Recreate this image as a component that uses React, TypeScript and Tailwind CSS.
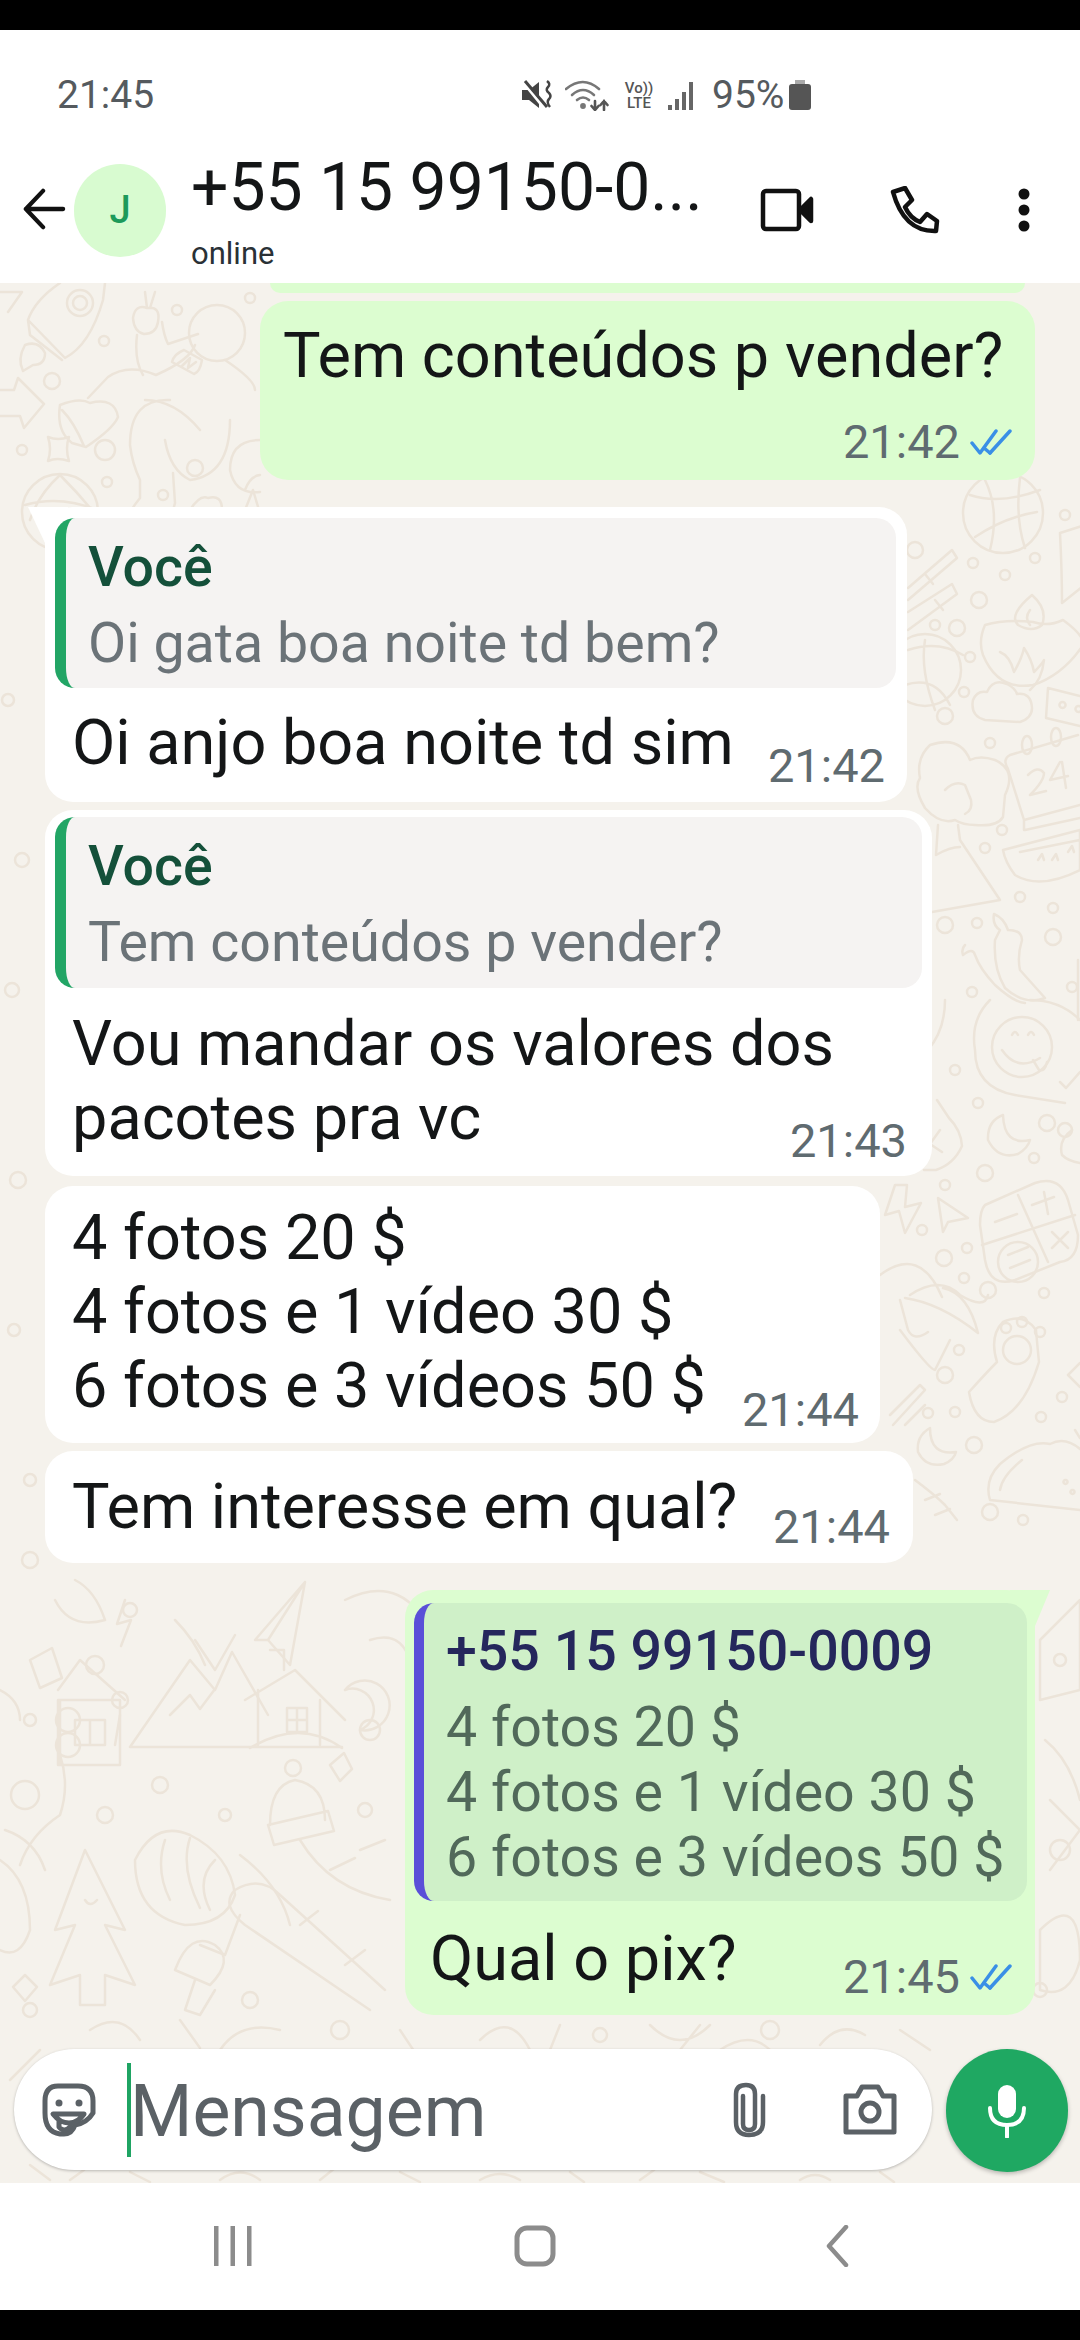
import React from "react";

const DOTS: [number, number, number][] = [
  [104,341,5],[52,381,8],[105,450,10],[195,468,8],[107,482,5],[22,450,5],[177,310,5],[250,298,5],[163,495,5],
  [915,550,8],[973,563,5],[1005,575,5],[979,600,8],[1035,558,5],[1065,515,5],[935,625,5],[957,628,8],[970,657,5],[964,692,5],[945,716,8],[990,743,5],[1002,830,5],[985,848,5],[1020,897,5],[1053,908,5],[1053,937,8],[945,925,8],[977,923,5],[972,992,5],[1072,987,5],
  [955,1070,5],[978,1103,5],[1047,1123,8],[1034,1158,5],[985,1173,8],[945,1185,5],[922,1230,5],[944,1258,8],[967,1248,5],[964,1278,5],[988,1290,8],[1044,1293,5],[959,1350,5],[945,1375,8],[1062,1397,5],[1041,1417,5],[928,1413,5],[955,1412,5],[974,1445,8],[990,1512,8],[1023,1520,5],
  [30,1560,8],[130,1610,7],[95,1665,9],[30,1720,6],[370,1730,10],[160,1785,8],[25,1795,14],[225,1815,6],[105,1815,8],[365,1810,7],[250,2000,8],[30,2010,7],[1060,1850,10],[1060,1660,6],[1040,1990,7],[340,2030,9],[600,2035,7],[770,2030,9],[12,990,7],[18,1180,8],[1065,1130,7],[8,700,6],[22,860,7],[14,1330,6],[30,1480,6]
];

function Wallpaper() {
  return (
    <svg className="absolute inset-0 w-full h-full" viewBox="0 0 1080 1900" fill="none" stroke="#ece4d9" strokeWidth="2.5" strokeLinecap="round" strokeLinejoin="round">
      <g transform="translate(0,-283)">
        {DOTS.map(([x, y, r], i) => <circle key={i} cx={x} cy={y} r={r} />)}
        {/* rocket */}
        <path d="M60 283 Q35 300 28 320 L65 358 Q90 345 103 300 L105 283 M28 320 L30 335 L62 360" />
        <circle cx="80" cy="303" r="13" /><circle cx="80" cy="303" r="7" />
        <path d="M25 345 q14 -5 20 8 q0 12 -12 12 l-10 6 q-6 -12 2 -26" />
        <path d="M0 292 H22 L8 312 M0 390 h14 l4 -12 26 26 -20 24 -4 -12 H0" />
        <path d="M48 437 q10 4 21 0 q-4 11 0 24 q-12 -4 -21 0 q4 -12 0 -24" />
        {/* astronaut */}
        <circle cx="217" cy="333" r="28" />
        <path d="M145 292 l2 16 M155 292 l-5 16 M133 318 q2 -14 14 -10 q14 -2 11 14 q-2 12 -14 12 q-10 -2 -11 -16" />
        <path d="M137 335 q-3 25 6 40 M162 322 q2 14 6 22 l30 -10 M195 345 q-5 15 -39 30 q-28 -12 -48 2 L88 398 M225 360 q30 20 30 30 M60 405 q20 -8 30 -2 q25 -6 28 14 q-5 12 -32 30 l-14 -4 q-16 -12 -12 -38 M62 410 q12 12 22 36 M170 400 q-40 -2 -40 45 q2 18 10 35 l0 18 q-16 20 -15 30 q5 6 25 10 q18 -6 25 -35 l-2 -30 M145 400 q30 0 55 30 M165 440 q5 30 25 40 q40 -5 40 -60" />
        <path d="M172 362 l22 12 q6 -2 8 -14 l-18 -10 q-10 4 -12 12 z M182 366 l8 -8 -2 10 8 -6" />
        <path d="M260 440 q-30 0 -30 30 q5 25 30 22 M245 490 q5 -14 15 -15" />
        <circle cx="60" cy="512" r="38" />
        <path d="M25 505 q35 -10 72 5 M60 475 q-22 20 -30 45 M60 475 q20 20 36 40" />
        {/* sliver area */}
        <path d="M190 510 q10 -16 18 -12 q14 -4 14 12 M245 510 l8 -20 6 20" />

        {/* disco ball */}
        <circle cx="1003" cy="513" r="40" />
        <path d="M970 495 q30 10 70 -5 M975 537 q30 -20 62 -25 M985 480 q15 30 5 70 M1020 478 q-5 40 5 70" />
        <path d="M1060 533 l25 -8 M1060 533 q2 40 2 70 l20 -16" />
        {/* crayons */}
        <path d="M908 588 L952 550 L957 558 L908 600 M908 612 L952 584 L957 594 L908 630 M925 574 l8 10 M935 600 l8 10" />
        <circle cx="925" cy="670" r="36" />
        <path d="M908 650 q30 -10 55 5 M905 685 q30 -10 45 20 M925 640 q-5 30 10 70" />
        {/* diya */}
        <path d="M1018 625 q-10 -10 14 -30 q16 14 10 30 q-10 8 -24 0 z M1030 610 q-6 8 0 15" />
        <path d="M985 625 q20 -6 48 -3 q15 5 30 -2 q22 16 20 25 q-20 30 -50 40 q-35 6 -50 -30 q-5 -14 2 -30" />
        <path d="M1000 652 q10 4 14 20 q8 -14 10 -24 q8 12 10 24 q8 -8 10 -12 q-2 20 -14 30" />
        {/* cloud */}
        <path d="M985 720 q-15 -4 -12 -20 q4 -10 14 -8 q6 -14 20 -8 q8 4 10 10 q14 -2 15 14 q0 10 -12 14 z" />
        <path d="M1048 688 l32 8 M1048 688 l-2 30 34 8 M1062 702 a3 3 0 1 0 1 0 M1078 706 a3 3 0 1 0 1 0" />
        {/* calendar 24 */}
        <path d="M1010 755 L1078 735 M1010 755 q-8 4 -2 14 L1024 820 L1080 805 M1025 830 L1080 818 M1024 820 v10" />
        <ellipse cx="1027" cy="745" rx="5" ry="9" /><ellipse cx="1056" cy="737" rx="5" ry="9" />
        <path d="M1028 775 q10 -10 16 -2 q0 8 -14 22 l16 -4 M1060 762 l-10 18 18 -4 M1062 762 l4 26" />
        {/* volcano */}
        <path d="M930 745 q30 -10 40 15 q10 -5 25 0 q22 10 10 35 l-2 22 q-6 10 -28 8 q-12 0 -20 -5 q-15 5 -30 -12 q-12 -20 -5 -30 q-4 -20 10 -33" />
        <path d="M945 790 q10 -10 20 -5 l6 15 q2 10 -6 14 M938 825 l-2 30 M958 825 l2 15 L1000 900 L932 912 M936 855 q14 -8 24 -8" />
        {/* watermelon */}
        <path d="M1003 850 L1080 830 V870 Q1040 890 1015 875 Q1005 862 1003 850 Z M1020 852 L1080 840" />
        <path d="M1038 860 l4 -6 2 6 M1052 860 l4 -6 2 6 M1068 852 l4 -6 2 6" />
        {/* chili */}
        <path d="M1000 930 q-8 -5 -6 -16 q10 4 14 16 q14 0 14 10 q-5 16 -2 30 l25 28 q-20 8 -40 -10 q-12 -20 -10 -48 z M965 945 q-4 4 -2 10 q10 -8 12 0 q5 14 20 30 q20 18 30 18" />
        <path d="M1078 960 v60" />
        {/* smiley */}
        <path d="M990 1000 q-20 20 -15 50 q0 38 40 45 l50 8 M1030 1000 q30 0 50 20" />
        <circle cx="1022" cy="1047" r="30" />
        <path d="M1002 1050 q15 22 38 8 M1012 1035 q3 -6 6 0 M1028 1035 q3 -6 6 0 M1033 1060 l6 10 q6 2 8 -8 M1060 1082 l6 6 14 -16" />
        <path d="M945 1000 q0 30 -17 50" />
        {/* moon + mask */}
        <path d="M1003 1115 q-16 6 -15 25 q10 20 30 14 q10 -6 12 -14 q-26 6 -27 -25 z" />
        <path d="M937 1100 l12 18 q12 12 13 28 q-8 18 -26 24 h-12 M940 1130 l-10 14 l12 8 M1072 1130 q-14 10 -10 25 q6 6 18 8" />
        {/* bolt + cursor */}
        <path d="M895 1185 h12 l-2 22 l16 -4 l-16 30 l-6 -22 l-14 4 z M938 1198 L968 1218 L948 1222 L943 1232 Z" />
        {/* calculator */}
        <path d="M985 1205 L1035 1183 Q1060 1175 1068 1200 L1078 1235 Q1078 1260 1060 1262 L1015 1280 Q990 1288 985 1260 L980 1225 Q980 1210 985 1205 Z M1018 1195 L1048 1262 M982 1245 L1075 1215" />
        <path d="M995 1222 l22 -8 M1032 1205 l22 -8 M1044 1192 l4 22 M1052 1232 l16 16 M1068 1232 l-16 16" />
        <circle cx="1018" cy="1262" r="20" />
        <path d="M1008 1255 l20 -8 M1010 1268 l20 -8" />
        {/* hat */}
        <path d="M880 1275 q40 -30 62 22 M910 1295 q30 -20 50 0 q25 15 28 0 M905 1298 q35 5 73 35 q-10 -40 -35 -45 M900 1300 l8 30 q6 12 20 2 M900 1330 q30 40 35 40 l15 -30" />
        {/* paw */}
        <path d="M1003 1322 q-14 14 -6 40 q-10 10 -28 30 q5 30 25 30 q30 -10 45 -60 q-2 -20 -3 -32 q-12 -18 -33 -8" />
        <circle cx="1017" cy="1350" r="14" /><circle cx="1006" cy="1328" r="5" /><circle cx="1022" cy="1322" r="5" /><circle cx="1040" cy="1332" r="5" />
        <path d="M1068 1375 l12 -12 M1068 1375 l12 12 M1075 1430 l5 8" />
        {/* sticks */}
        <path d="M890 1415 L920 1385 L925 1390 L893 1425 M905 1425 L925 1405" />
        {/* moon 2 */}
        <path d="M930 1428 q-14 8 -12 24 q8 16 26 12 q10 -4 12 -12 q-26 4 -26 -24 z" />
        {/* taco */}
        <path d="M990 1500 q-6 -20 10 -36 q30 -25 50 -20 q15 -8 30 5 M990 1500 L1080 1510 M1000 1490 q2 -14 22 -30 M1065 1480 a2 2 0 1 0 1 0 M1072 1490 a2 2 0 1 0 1 0" />
        <path d="M915 1480 q20 15 30 25 l12 15 M925 1500 l15 -6 M935 1515 l15 -6" />

        {/* lower left */}
        <path d="M255 1640 L305 1582 L290 1665 L268 1640 Z M305 1582 L268 1640 M195 1640 l20 30 20 -35 M175 1620 q20 20 30 45 M55 1600 q15 30 50 20 q-10 -30 -30 -40 M30 1660 l22 -12 10 30 -22 10 z" />
        <path d="M120 1715 l-5 30 M125 1600 l-8 24 14 -4 -10 26" />
        <path d="M345 1600 q60 -30 90 40 M370 1640 q30 -10 40 20" />
        <path d="M58 1690 L80 1660 L125 1700 M58 1700 H120 V1765 H58 Z M60 1700 v65 M75 1720 h30 v25 h-30 z M90 1720 v25 M0 1690 q20 10 20 30" />
        <circle cx="68" cy="1720" r="12" /><circle cx="68" cy="1745" r="12" /><circle cx="120" cy="1700" r="8"/>
        <path d="M130 1747 L190 1660 L215 1690 L232 1652 L268 1715 M130 1747 H342 M170 1715 l20 -20 10 14 15 -20" />
        <path d="M245 1700 L295 1670 L345 1720 M258 1690 V1745 M320 1700 V1745 M287 1708 h20 v24 h-20 z M297 1708 v24 M287 1720 h20 M270 1650 h14 v20 M250 1748 q50 -30 92 0" />
        <path d="M345 1690 a25 25 0 1 1 15 40 a20 20 0 0 0 -15 -40" />
        <path d="M270 1825 q0 -40 25 -45 q30 5 30 40 M268 1825 l60 -14 6 20 -60 14 z" />
        <circle cx="293" cy="1768" r="8" />
        <path d="M330 1765 l14 -12 8 16 -12 12 z" />
        <path d="M60 1755 q10 30 0 60 q-30 20 -40 50 M5 1830 q30 10 40 40" />
        <path d="M135 1860 q20 -40 55 -25 q40 20 45 60 q-10 30 -50 30 q-50 -10 -50 -65 M165 1840 q-10 30 5 60 M190 1838 q-10 30 10 70 M215 1860 q-20 20 -5 50 M240 1915 l-15 40 -25 -10 M240 1855 q40 30 50 70" />
        <path d="M85 1850 L125 1930 L105 1925 L135 1985 L105 1975 V2005 H80 V1975 L50 1985 L75 1925 L55 1930 Z M85 1900 q5 8 12 0 M0 1860 q30 20 30 70 q-10 30 -30 20" />
        <path d="M175 1970 q15 -40 40 -25 q20 15 -5 40 z M195 1980 l-10 30 15 5 15 -25" />
        <path d="M235 1890 q-15 15 10 35 L370 2010 M235 1890 q25 -15 45 5 L385 1990 M345 1965 l20 -15 M300 1925 l18 -14 M300 1840 q30 50 90 60 M330 1870 l25 -12 M360 1850 l25 -10" />
        <path d="M25 1975 l12 12 -12 14 -12 -14 z" />
        {/* lower right strip */}
        <path d="M1040 1640 l40 -40 v90 l-40 10 z M1045 1740 q25 20 35 60 M1050 1800 l30 30 -30 40 M1040 1930 q40 -40 40 30 q-10 40 -40 30 z" />
        <path d="M40 2050 l-30 30 M90 2030 q30 -20 50 10 M180 2020 l20 28 M220 2050 q20 -30 60 -20 M400 2030 l20 30 M480 2040 q30 -30 50 10 M560 2025 l-12 30 M650 2025 q30 30 60 0 M680 2050 l20 -25 M720 2050 q30 -20 50 0 M820 2045 q20 -25 45 -10 M900 2030 l30 20" />
        <path d="M30 2165 l20 15 M70 2180 l14 -10 M130 2172 l20 10 M220 2180 q20 -15 40 0 M320 2180 l15 -12 M400 2172 l20 10 M480 2180 q20 -12 40 0 M570 2172 l14 10 M640 2180 l14 -10 M700 2172 l24 10 M800 2180 q15 -10 30 0 M880 2172 l14 10" />
      </g>
    </svg>
  );
}

function Ticks() {
  return (
    <svg width="42" height="26" viewBox="0 0 42 26" fill="none" stroke="#3a8fe6" strokeWidth="3.500" strokeLinecap="round" strokeLinejoin="round" className="ml-[10px] mb-[10px]">
      <path d="M2 14 L10 24 L26 2" />
      <path d="M20 24 L40 2" />
      <path d="M14 19 L20 24" />
    </svg>
  );
}

function Time({ t, cls }: { t: string; cls: string }) {
  return <span className={`text-[47px] leading-[46px] text-[#5f6b70] whitespace-nowrap ${cls}`}>{t}</span>;
}

function TailLeft() {
  return (
    <svg className="absolute left-[-17px] top-0" width="40" height="36" viewBox="0 0 40 36" fill="#ffffff">
      <path d="M0 0 H40 V36 H17 Z" />
    </svg>
  );
}

function TailRight() {
  return (
    <svg className="absolute right-[-15px] top-0" width="40" height="36" viewBox="0 0 40 36" fill="#dcfdd0">
      <path d="M40 0 H0 V36 H25 Z" />
    </svg>
  );
}

function QuoteYou({ text, cls }: { text: string; cls: string }) {
  return (
    <div className={`rounded-[20px] border-l-[11px] border-l-[#22a565] bg-[#f5f3f2] pl-[22px] ${cls}`}>
      <div className="text-[55.500px] leading-[60px] font-medium text-[#14503a]">Você</div>
      <div className="mt-[16px] text-[55.500px] leading-[60px] text-[#6b7378] whitespace-nowrap">{text}</div>
    </div>
  );
}

export default function App() {
  return (
    <div className="w-[1080px] h-[2340px] bg-black py-[30px] flex flex-col overflow-hidden font-['Roboto',sans-serif] text-[#141617]">
      {/* status + app bar */}
      <div className="h-[253px] bg-white flex flex-col shrink-0">
        <div className="h-[100px] shrink-0 flex items-center pl-[57px] pt-[30px]">
          <span className="text-[39px] leading-[46px] text-[#555a5e] w-[464px]">21:45</span>
          <svg width="32" height="32" viewBox="0 0 32 32" fill="#444">
            <path d="M1 11 h7 l10 -8 v26 l-10 -8 h-7 z" />
            <path d="M2 3 L24 30" stroke="#fff" strokeWidth="3" />
            <path d="M4 2 L26 28" stroke="#444" strokeWidth="3" />
            <path d="M26 2 q4 3 1 6 q-3 3 1 6 q3 3 0 6 q-3 3 1 8" stroke="#444" strokeWidth="2.500" fill="none" />
          </svg>
          <svg className="ml-[12px]" width="44" height="32" viewBox="0 0 44 32" fill="none" stroke="#777" strokeWidth="2.600" strokeLinecap="round">
            <path d="M1 10 Q18 -4 34 10" />
            <path d="M7 16 Q18 6 29 16" />
            <path d="M12 21 Q18 16 24 21" />
            <circle cx="18" cy="27" r="1.600" fill="#777" />
            <path d="M30 22 v9 M26.500 27 l3.500 4 3.500 -4 M39 31 v-9 M35.500 26 l3.500 -4 3.500 4" stroke="#555" />
          </svg>
          <div className="ml-[13px] flex flex-col items-center text-[#555] font-medium w-[34px]">
            <span className="text-[15px] leading-[16px]">Vo))</span>
            <span className="text-[15px] leading-[15px]">LTE</span>
          </div>
          <svg className="ml-[11px]" width="30" height="32" viewBox="0 0 30 32" fill="#666">
            <rect x="1" y="26" width="4" height="5" />
            <rect x="8" y="20" width="4" height="11" />
            <rect x="15" y="13" width="4" height="18" />
            <rect x="22" y="3" width="4" height="28" />
          </svg>
          <span className="ml-[15px] text-[39px] leading-[46px] text-[#555a5e]">95%</span>
          <svg className="ml-[4px]" width="24" height="32" viewBox="0 0 24 32" fill="#555">
            <rect x="7" y="1" width="10" height="4" fill="#aaa" />
            <rect x="1" y="5" width="22" height="26" rx="3" />
          </svg>
        </div>
        <div className="flex-1 flex items-start">
          <svg className="ml-[22px] mt-[58px]" width="44" height="42" viewBox="0 0 44 44" fill="none" stroke="#111" strokeWidth="4.500" strokeLinecap="round" strokeLinejoin="round">
            <path d="M42 22 H3 M21 3 L3 22 L21 41" />
          </svg>
          <div className="ml-[8px] mt-[34px] w-[92px] h-[93px] rounded-full bg-[#d8fbd0] flex items-center justify-center text-[38px] text-[#1d9a5a] font-medium">J</div>
          <div className="ml-[25px] flex flex-col">
            <div className="mt-[21px] w-[520px] text-[66px] leading-[74px] whitespace-nowrap">+55 15 99150-0...</div>
            <div className="mt-[11px] text-[31px] leading-[36px] text-[#2a3136]">online</div>
          </div>
          <svg className="ml-[49px] mt-[58px]" width="54" height="44" viewBox="0 0 54 44" fill="none" stroke="#111" strokeWidth="4.500" strokeLinejoin="round">
            <rect x="3" y="3" width="36" height="38" rx="3" />
            <path d="M40 22 L51 11 V33 Z" fill="#111" />
          </svg>
          <svg className="ml-[76px] mt-[56px]" width="50" height="48" viewBox="0 0 50 48" fill="none" stroke="#111" strokeWidth="4.500" strokeLinejoin="round" strokeLinecap="round">
            <path d="M3 6 L15 2 L22 14 L15 21 Q20 32 30 36 L37 28 L47 35 L46 45 Q14 46 3 6 Z" />
          </svg>
          <svg className="ml-[76px] mt-[58px]" width="16" height="44" viewBox="0 0 16 44" fill="#111">
            <circle cx="8" cy="6" r="5.500" />
            <circle cx="8" cy="22" r="5.500" />
            <circle cx="8" cy="38" r="5.500" />
          </svg>
        </div>
      </div>

      {/* chat */}
      <div className="relative flex-1 bg-[#f5f2ec] overflow-hidden">
        <Wallpaper />
        <div className="relative flex flex-col h-full">
          <div className="h-[10px] ml-[270px] w-[755px] bg-[#dcfdd0] rounded-b-[16px]" />

          <div className="mt-[8px] ml-[260px] w-[775px] h-[179px] rounded-[28px] bg-[#dcfdd0] pl-[23px] pr-[23px] pt-[18px] flex flex-col">
            <div className="text-[63px] leading-[74px] whitespace-nowrap">Tem conteúdos p vender?</div>
            <div className="mt-[26px] flex justify-end items-end">
              <Time t="21:42" cls="" />
              <Ticks />
            </div>
          </div>

          <div className="relative mt-[27px] ml-[45px] w-[862px] h-[295px] rounded-[28px] bg-white pt-[11px] pl-[10px] pr-[11px]">
            <TailLeft />
            <QuoteYou text="Oi gata boa noite td bem?" cls="relative h-[170px] pt-[20px]" />
            <div className="relative pt-[18px] pl-[17px] pr-[11px] flex justify-between items-end">
              <div className="text-[63px] leading-[74px] mb-[22px] whitespace-nowrap">Oi anjo boa noite td sim</div>
              <Time t="21:42" cls="mb-[13px]" />
            </div>
          </div>

          <div className="mt-[8px] ml-[45px] w-[887px] h-[366px] rounded-[28px] bg-white pt-[7px] pl-[10px] pr-[10px]">
            <QuoteYou text="Tem conteúdos p vender?" cls="h-[171px] pt-[20px]" />
            <div className="pt-[19px] pl-[17px] pr-[15px] flex justify-between items-end">
              <div className="text-[63px] leading-[74px] mb-[21px] whitespace-nowrap">Vou mandar os valores dos<br />pacotes pra vc</div>
              <Time t="21:43" cls="mb-[12px] -ml-[100px]" />
            </div>
          </div>

          <div className="mt-[10px] ml-[45px] w-[835px] h-[257px] rounded-[28px] bg-white pt-[15px] pl-[27px] pr-[21px] flex justify-between items-end">
            <div className="text-[63px] leading-[74px] mb-[20px] whitespace-nowrap self-start">4 fotos 20 $<br />4 fotos e 1 vídeo 30 $<br />6 fotos e 3 vídeos 50 $</div>
            <Time t="21:44" cls="mb-[10px]" />
          </div>

          <div className="mt-[8px] ml-[45px] w-[868px] h-[112px] rounded-[28px] bg-white pt-[19px] pl-[27px] pr-[23px] flex justify-between items-end">
            <div className="text-[63px] leading-[74px] mb-[19px] whitespace-nowrap">Tem interesse em qual?</div>
            <Time t="21:44" cls="mb-[13px]" />
          </div>

          <div className="relative mt-[27px] ml-[405px] w-[630px] h-[425px] rounded-[28px] bg-[#dcfdd0] pt-[13px] pl-[9px] pr-[8px]">
            <TailRight />
            <div className="relative h-[298px] rounded-[20px] border-l-[10px] border-l-[#5a4fd8] bg-[#cff0c8] pl-[22px] pt-[19px]">
              <div className="text-[55.500px] leading-[60px] font-medium text-[#25275c] whitespace-nowrap">+55 15 99150-0009</div>
              <div className="mt-[13px] text-[55.500px] leading-[65px] text-[#51695a] whitespace-nowrap">4 fotos 20 $<br />4 fotos e 1 vídeo 30 $<br />6 fotos e 3 vídeos 50 $</div>
            </div>
            <div className="pt-[21px] pl-[16px] flex justify-between items-end">
              <div className="text-[63px] leading-[74px] mb-[18px] whitespace-nowrap">Qual o pix?</div>
              <div className="flex items-end pr-[15px]">
                <Time t="21:45" cls="mb-[14px]" />
                <div className="mb-[14px] flex"><Ticks /></div>
              </div>
            </div>
          </div>

          {/* input */}
          <div className="mt-[34px] flex items-start">
            <div className="ml-[14px] w-[918px] h-[121px] rounded-full bg-white shadow-[0_1px_3px_rgba(0,0,0,0.25)] flex items-center">
              <svg className="ml-[28px]" width="54" height="54" viewBox="0 0 54 54" fill="none" stroke="#5b6166" strokeWidth="5" strokeLinecap="round" strokeLinejoin="round">
                <path d="M16 3 H36 Q51 3 51 18 V30 Q45 40 33 42 Q30 51 22 51 H18 Q3 49 3 30 V18 Q3 3 16 3 Z" />
                <circle cx="17" cy="20" r="3.500" fill="#5b6166" stroke="none" />
                <circle cx="37" cy="20" r="3.500" fill="#5b6166" stroke="none" />
                <path d="M11 31 H42 Q36 40 27 40 Q18 40 11 31 Z M17 38 V44 Q22 50 28 44 L29 40" />
              </svg>
              <div className="ml-[31px] w-[4px] h-[94px] bg-[#1fa463] shrink-0" />
              <span className="-ml-[1px] pt-[4px] text-[71.500px] leading-[80px] text-[#5b6166] w-[601px] whitespace-nowrap">Mensagem</span>
              <svg width="36" height="56" viewBox="0 0 36 56" fill="none" stroke="#5b6166" strokeWidth="4.500" strokeLinecap="round" strokeLinejoin="round">
                <path d="M12 14 V42 Q12 48 18 48 Q24 48 24 42 V12 Q24 3 15 3 Q5 3 5 12 V40 Q5 53 18 53 Q32 53 32 40 V14" />
              </svg>
              <svg className="ml-[76px]" width="54" height="52" viewBox="0 0 54 52" fill="none" stroke="#5b6166" strokeWidth="5" strokeLinejoin="round">
                <path d="M3 12 H14 L19 3 H35 L40 12 H51 V48 H3 Z" />
                <circle cx="27" cy="28" r="9" />
              </svg>
            </div>
            <div className="ml-[14px] w-[122px] h-[123px] rounded-full bg-[#1fa862] shadow-[0_2px_4px_rgba(0,0,0,0.25)] flex items-center justify-center">
              <svg width="40" height="54" viewBox="0 0 40 54" fill="none">
                <rect x="11" y="1" width="18" height="33" rx="9" fill="#ffffff" />
                <path d="M3 24 Q3 41 20 41 Q37 41 37 24" stroke="#ffffff" strokeWidth="4" strokeLinecap="round" />
                <path d="M20 41 V53" stroke="#ffffff" strokeWidth="4" strokeLinecap="round" />
              </svg>
            </div>
          </div>
        </div>
      </div>

      {/* nav */}
      <div className="h-[127px] bg-white shrink-0 flex items-start pt-[42px] pl-[213px]">
        <svg width="40" height="42" viewBox="0 0 40 42" fill="#8c8c8c">
          <rect x="1" y="1" width="4.500" height="40" />
          <rect x="17.500" y="1" width="4.500" height="40" />
          <rect x="34" y="1" width="4.500" height="40" />
        </svg>
        <svg className="ml-[261px]" width="42" height="42" viewBox="0 0 42 42" fill="none" stroke="#8c8c8c" strokeWidth="5">
          <rect x="3" y="3" width="36" height="36" rx="10" />
        </svg>
        <svg className="ml-[269px]" width="24" height="42" viewBox="0 0 24 42" fill="none" stroke="#8c8c8c" strokeWidth="4.500" strokeLinecap="round" strokeLinejoin="round">
          <path d="M21 2 L4 21 L21 40" />
        </svg>
      </div>
    </div>
  );
}
